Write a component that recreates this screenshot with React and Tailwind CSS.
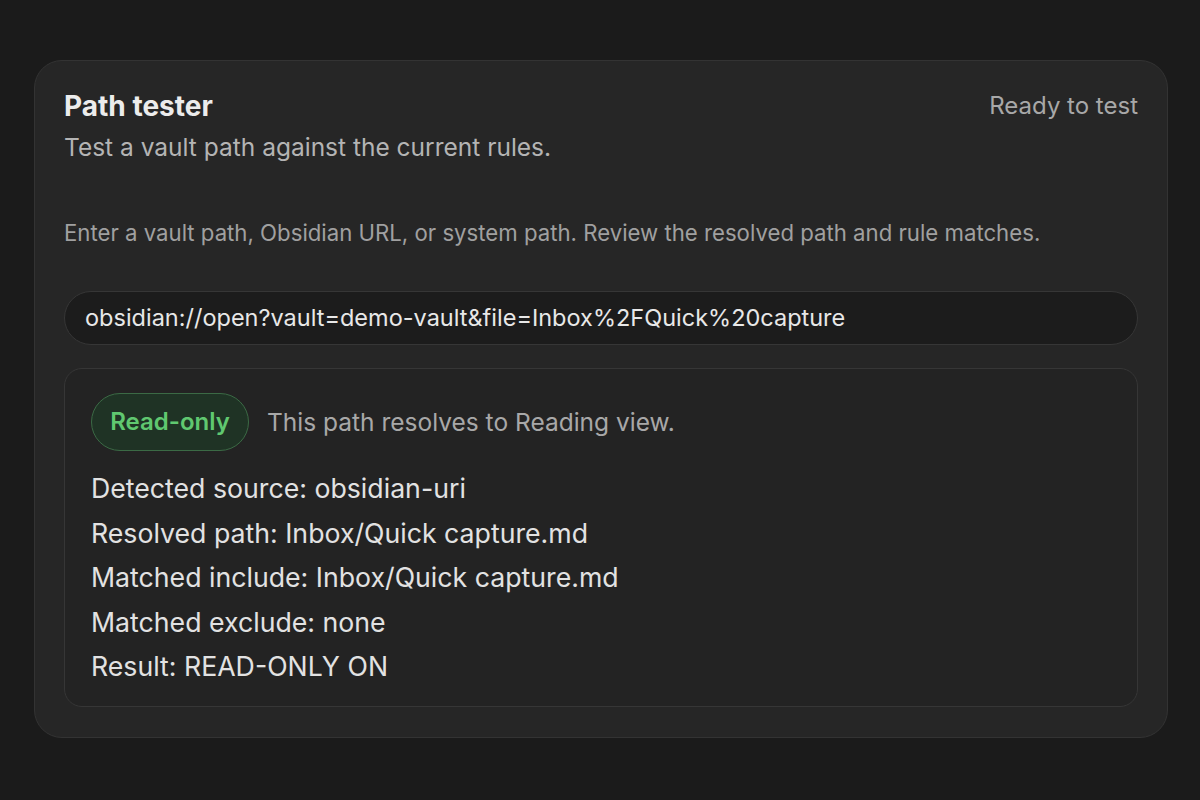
export default function App() {
  const lines = [
    "Detected source: obsidian-uri",
    "Resolved path: Inbox/Quick capture.md",
    "Matched include: Inbox/Quick capture.md",
    "Matched exclude: none",
    "Result: READ-ONLY ON",
  ];
  return (
    <div
      className="w-[1200px] h-[800px] bg-[#1b1b1b] pt-[60px] px-[34px]"
      style={{ fontFamily: "Inter, 'Noto Sans', sans-serif" }}
    >
      <div className="w-[1134px] h-[678px] rounded-[28px] border border-[#333333] bg-[#262626] px-[29px] pt-[29px]">
        <div className="flex items-start justify-between">
          <div className="flex flex-col">
            <div className="text-[28px] leading-[32px] font-bold text-[#ececec]">Path tester</div>
            <div className="mt-[11px] text-[24.5px] leading-[28px] text-[#b4b4b4]">
              Test a vault path against the current rules.
            </div>
          </div>
          <div className="text-[24px] leading-[32px] text-[#a8a8a8]">Ready to test</div>
        </div>
        <div className="mt-[58px] text-[22.2px] leading-[28px] text-[#a0a0a0]">
          Enter a vault path, Obsidian URL, or system path. Review the resolved path and rule matches.
        </div>
        <div className="mt-[44px] h-[54px] rounded-full border border-[#363636] bg-[#1c1c1c] flex items-center px-[20px] text-[23.5px] text-[#e8e8e8]">
          obsidian://open?vault=demo-vault&amp;file=Inbox%2FQuick%20capture
        </div>
        <div className="mt-[23px] h-[339px] rounded-[18px] border border-[#363636] bg-[#232323] px-[26px] pt-[24px]">
          <div className="flex items-center gap-[18px]">
            <div className="h-[58px] w-[158px] rounded-full border border-[#3b6a45] bg-[#1f3325] flex items-center justify-center text-[24px] font-semibold text-[#60c870]">
              Read-only
            </div>
            <div className="text-[24.5px] text-[#a8a8a8]">This path resolves to Reading view.</div>
          </div>
          <div className="mt-[15px] flex flex-col">
            {lines.map((l) => (
              <div key={l} className="text-[26.7px] leading-[44.5px] text-[#e2e2e2]">
                {l}
              </div>
            ))}
          </div>
        </div>
      </div>
    </div>
  );
}
